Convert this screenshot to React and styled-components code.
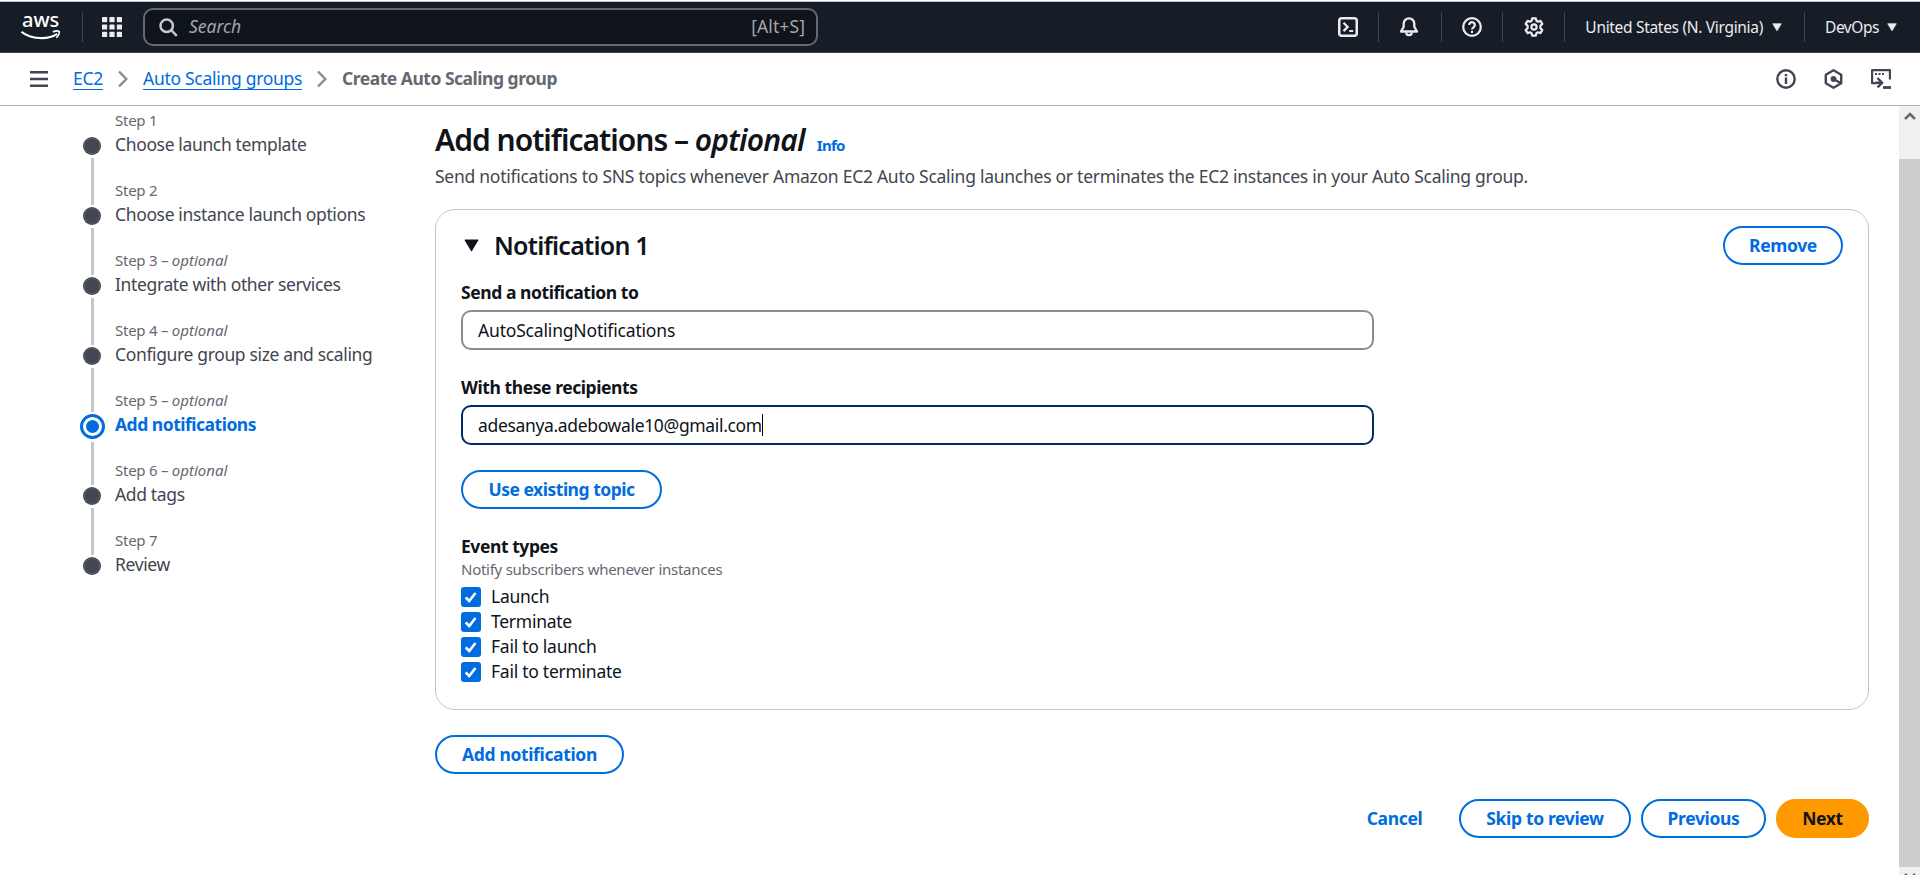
import React from "react";
import styled, { createGlobalStyle, css } from "styled-components";

const color = {
  navy: "#161d26",
  ink: "#0f141a",
  body: "#424650",
  muted: "#656871",
  link: "#006ce0",
  line: "#c6c6cd",
  navIcon: "#ebebf0",
};

const GlobalStyle = createGlobalStyle`
  * { box-sizing: border-box; }
  body {
    margin: 0;
    overflow: hidden;
    background: #fff;
    color: ${color.ink};
    font-family: "Noto Sans", "Open Sans", sans-serif;
    font-size: 17.5px;
    line-height: 25px;
    letter-spacing: -0.26px;
  }
  svg { display: block; flex: none; }
`;

const Page = styled.div`
  display: flex;
  flex-direction: column;
  width: 1920px;
  height: 875px;
`;

/* ---------- top navigation ---------- */
const TopNav = styled.header`
  display: flex;
  align-items: center;
  flex: none;
  height: 52px;
  margin-top: 1px;
  padding: 0 23px 0 21px;
  border-top: 1px solid #b9c6cf;
  border-bottom: 1px solid #424250;
  background: ${color.navy};
  color: ${color.navIcon};
`;

const NavDivider = styled.span`
  flex: none;
  width: 1px;
  height: 30px;
  margin-left: ${(p) => p.$before}px;
  margin-right: ${(p) => p.$after}px;
  background: #424650;
`;

const SearchBox = styled.div`
  display: flex;
  align-items: center;
  width: 675px;
  height: 38px;
  margin-left: 21px;
  padding: 0 11px 0 14px;
  border: 2px solid ${color.muted};
  border-radius: 10px;
  background: ${color.ink};
  color: #a4a4ad;
  letter-spacing: 0;
`;

const SearchPlaceholder = styled.span`
  flex: 1;
  margin-left: 11px;
  padding-bottom: 2px;
  font-style: italic;
`;

const Shortcut = styled.span`
  padding-bottom: 2px;
  letter-spacing: 0.1px;
`;

const NavTools = styled.div`
  display: flex;
  align-items: center;
  margin-left: auto;
`;

const NavMenu = styled.span`
  display: flex;
  align-items: center;
  gap: ${(p) => p.$gap}px;
  font-size: 15.5px;
  letter-spacing: ${(p) => p.$tracking}px;
  white-space: nowrap;
`;

/* ---------- breadcrumb bar ---------- */
const CrumbBar = styled.div`
  display: flex;
  align-items: center;
  flex: none;
  height: 53px;
  padding: 0 29px 0 30px;
  border-bottom: 1px solid #b4b4bb;
`;

const Crumbs = styled.nav`
  display: flex;
  align-items: center;
  gap: 15px;
  margin-left: 25px;
`;

const CrumbLink = styled.a`
  width: ${(p) => p.$width}px;
  height: 22px;
  border-bottom: 1px solid ${color.link};
  color: ${color.link};
  line-height: 21px;
  letter-spacing: -0.29px;
  white-space: nowrap;
`;

const CrumbCurrent = styled.span`
  padding-bottom: 1px;
  color: ${color.muted};
  font-weight: 700;
  letter-spacing: -0.49px;
`;

const PageTools = styled.div`
  display: flex;
  align-items: center;
  gap: 28px;
  margin-left: auto;
`;

/* ---------- body ---------- */
const Body = styled.div`
  display: flex;
  flex: 1;
  min-height: 0;
`;

const Steps = styled.ol`
  flex: none;
  width: 435px;
  margin: 0;
  padding: 3px 0 0 80px;
  list-style: none;
`;

const Step = styled.li`
  display: flex;
  gap: 10px;
  height: 70px;
`;

const Rail = styled.div`
  display: flex;
  flex-direction: column;
  align-items: center;
  width: 25px;
`;

const RailLine = styled.span`
  flex: ${(p) => (p.$upper ? "none" : "1")};
  width: 3px;
  height: ${(p) => (p.$upper ? `${p.$upper}px` : "auto")};
  background: ${(p) => (p.$hidden ? "transparent" : color.line)};
`;

const Dot = styled.span`
  display: flex;
  align-items: center;
  justify-content: center;
  flex: none;
  width: 18px;
  height: 18px;
  margin: 2px 1px 3px 0;
  border-radius: 50%;
  background: ${color.body};
  &::after {
    content: "";
    width: 14px;
    height: 14px;
    border: 1px solid #5a5e68;
    border-radius: 50%;
  }
  ${(p) =>
    p.$active &&
    css`
      width: 25px;
      height: 25px;
      margin-right: 0;
      border: 3px solid ${color.link};
      background: #fff;
      &::after {
        width: 13px;
        height: 13px;
        border: 0;
        background: ${color.link};
      }
    `}
`;

const StepCaption = styled.div`
  height: 22px;
  color: ${color.muted};
  font-size: 15px;
  line-height: 22px;
  em { letter-spacing: 0; }
`;

const StepTitle = styled.div`
  height: 26px;
  line-height: 26px;
  color: ${(p) => (p.$active ? color.link : color.body)};
  font-weight: ${(p) => (p.$active ? 700 : 400)};
  letter-spacing: ${(p) => (p.$active ? -0.49 : -0.36)}px;
  white-space: nowrap;
`;

const Main = styled.main`
  flex: 1;
  padding: 15px 30px 0 0;
`;

const PageTitle = styled.h1`
  display: flex;
  align-items: baseline;
  height: 38px;
  margin: 0 0 5px;
  font-size: 30px;
  font-weight: 600;
  line-height: 38px;
  letter-spacing: -1px;
  white-space: pre;
  em { letter-spacing: -0.75px; }
`;

const InfoLink = styled.a`
  margin-left: 12px;
  color: ${color.link};
  font-size: 15px;
  font-weight: 700;
  line-height: 20px;
  letter-spacing: -0.7px;
`;

const Description = styled.p`
  margin: 0 0 20px;
  color: ${color.body};
  letter-spacing: -0.265px;
`;

const Card = styled.section`
  height: 501px;
  padding: 16px 25px 0;
  border: 1px solid ${color.line};
  border-radius: 20px;
`;

const CardHeader = styled.div`
  display: flex;
  align-items: center;
  height: 39px;
  margin-bottom: 15px;
  padding-left: 3px;
`;

const CardTitle = styled.h2`
  flex: 1;
  margin: 0 0 0 15px;
  font-size: 25px;
  font-weight: 600;
  line-height: 31px;
  letter-spacing: -0.75px;
`;

const Button = styled.button`
  display: inline-flex;
  align-items: center;
  justify-content: center;
  width: ${(p) => p.$width}px;
  height: 39px;
  padding: 0;
  border: 2px solid ${(p) => (p.$primary ? "#ff9900" : p.$plain ? "transparent" : color.link)};
  border-radius: 20px;
  background: ${(p) => (p.$primary ? "#ff9900" : "transparent")};
  color: ${(p) => (p.$primary ? color.ink : color.link)};
  font: inherit;
  font-weight: 700;
  letter-spacing: ${(p) => p.$tracking ?? -0.35}px;
  white-space: nowrap;
`;

const Field = styled.div`
  width: 913px;
  margin-bottom: 25px;
`;

const Label = styled.div`
  font-weight: 700;
  letter-spacing: -0.43px;
`;

const TextInput = styled.div`
  display: flex;
  align-items: center;
  height: 40px;
  margin-top: 5px;
  padding: 0 15px;
  border: 2px solid ${(p) => (p.$focused ? "#002b66" : "#8c8c94")};
  border-radius: 10px;
  letter-spacing: ${(p) => p.$tracking}px;
`;

const Caret = styled.span`
  width: 1px;
  height: 22px;
  background: #000;
`;

const EventTypes = styled.div`
  margin-top: 25px;
`;

const Hint = styled.div`
  margin-bottom: 5px;
  color: ${color.muted};
  font-size: 15px;
  line-height: 20px;
`;

const CheckRow = styled.div`
  display: flex;
  align-items: center;
  gap: 10px;
  height: 25px;
`;

const CheckBox = styled.span`
  display: flex;
  align-items: center;
  justify-content: center;
  width: 20px;
  height: 20px;
  border-radius: 3px;
  background: ${color.link};
`;

const AddRow = styled.div`
  display: flex;
  margin-top: 25px;
`;

const Actions = styled.div`
  display: flex;
  justify-content: flex-end;
  gap: 10px;
  margin-top: 25px;
`;

const ScrollTrack = styled.div`
  display: flex;
  flex-direction: column;
  align-items: center;
  flex: none;
  width: 21px;
  background: #f0f0f0;
`;

const ScrollArrow = styled.div`
  display: flex;
  justify-content: center;
  width: 21px;
  height: ${(p) => p.$height}px;
  padding-top: 6px;
  overflow: hidden;
`;

const ScrollThumb = styled.div`
  width: 21px;
  height: 708px;
  background: #cdcdcd;
`;

/* ---------- icons ---------- */
const AwsLogo = () => (
  <svg width="40" height="50" viewBox="0 0 40 50" fill="#fff">
    <text x="1" y="24.5" fontFamily="Noto Sans" fontSize="20" fontWeight="500" letterSpacing="0">aws</text>
    <g fill="none" stroke="#fff">
      <path d="M0.500 29.700C10 37.500 27 38.100 36.200 31.800" strokeWidth="2.100" />
      <path d="M31.800 29.900c2.600-1 5.300-1.100 6.200-.5.500 1.300-.4 4.300-2.600 6.400" strokeWidth="1.700" />
    </g>
  </svg>
);

const AppsIcon = () => (
  <svg width="20" height="20" fill={color.navIcon}>
    {[0, 7.4, 14.8].map((y) =>
      [0, 7.4, 14.8].map((x) => <rect key={`${x}-${y}`} x={x} y={y} width="5.2" height="5.2" rx="0.6" />)
    )}
  </svg>
);

const SearchIcon = () => (
  <svg width="19" height="19" fill="none" stroke="#c6c6cd" strokeWidth="2.5">
    <circle cx="7.7" cy="7.7" r="6.2" />
    <path d="M12.2 12.2l5.6 5.6" />
  </svg>
);

const navStroke = { fill: "none", stroke: color.navIcon, strokeWidth: 2.5, strokeLinejoin: "round" };

const TerminalIcon = () => (
  <svg width="20" height="20" {...navStroke}>
    <rect x="1.25" y="1.25" width="17.5" height="17.5" rx="2.5" />
    <path d="M5.5 5.7l4.2 4.2-4.2 4.2M11.2 14h4" strokeWidth="2.2" strokeLinejoin="miter" />
  </svg>
);

const BellIcon = () => (
  <svg width="20" height="20" {...navStroke} strokeWidth="2.3">
    <path d="M10 1.3a5.3 5.3 0 0 0-5.3 5.3v3.2L2 14.5h16L15.3 9.8V6.6A5.3 5.3 0 0 0 10 1.3z" />
    <path d="M7.3 15.5a2.7 2.7 0 0 0 5.4 0" />
  </svg>
);

const HelpIcon = () => (
  <svg width="20" height="20" {...navStroke} strokeWidth="2.2">
    <circle cx="10" cy="10" r="8.8" />
    <path d="M7.2 8a2.8 2.8 0 1 1 4.300 2.300c-.9.6-1.5 1-1.5 2.200" />
    <path d="M10 13.800v2.200" />
  </svg>
);

const GearIcon = () => (
  <svg width="20" height="20" {...navStroke} strokeWidth="2.2">
    <path d="M8.2 1.3h3.6l.6 2.5 1.5.9 2.5-.8 1.9 3-1.9 1.900v2.400l1.900 1.900-1.900 3-2.500-.8-1.500.9-.6 2.500H8.200l-.6-2.500-1.500-.9-2.500.8-1.900-3 1.900-1.900V8.800L1.700 6.900l1.900-3 2.500.8 1.500-.9z" />
    <circle cx="10" cy="10" r="2.6" />
  </svg>
);

const TriangleDown = ({ size = 10, fill = color.navIcon }) => (
  <svg width={size} height={size * 0.86} viewBox="0 0 14 12" fill={fill} stroke={fill} strokeLinejoin="round">
    <path d="M1 1h12L7 11z" />
  </svg>
);

const MenuIcon = () => (
  <svg width="18" height="18" stroke={color.body} strokeWidth="2.4">
    <path d="M0 2.2h18M0 9h18M0 15.8h18" />
  </svg>
);

const ChevronRight = () => (
  <svg width="10" height="18" fill="none" stroke="#8c8c94" strokeWidth="2.5">
    <path d="M1 1.5l7.3 7.5L1 16.5" />
  </svg>
);

const InfoIcon = () => (
  <svg width="20" height="20" fill="none" stroke={color.body} strokeWidth="2.4">
    <circle cx="10" cy="10" r="8.7" />
    <path d="M10 5v2.2M10 8.5v6.5" />
  </svg>
);

const HexIcon = () => (
  <svg width="19" height="20" fill="none" stroke={color.body} strokeWidth="2.4" strokeLinejoin="round">
    <path d="M9.5 1.3l7.7 4.4v8.6l-7.7 4.4-7.7-4.4V5.7z" />
    <circle cx="9.5" cy="10" r="2.9" fill={color.body} stroke="none" />
    <path d="M9.5 10l7 4" />
  </svg>
);

const ShellIcon = () => (
  <svg width="20" height="20" fill="none" stroke={color.body} strokeWidth="2.2">
    <path d="M5.500 14.200H1.100V1.100h17.800v9.400" strokeLinejoin="round" />
    <path d="M4 5h2M7.500 5h2M11 5h2" />
    <path d="M4.500 13.800h6M6.500 9l4.600 4.800-4.600 4.600" strokeWidth="2.400" />
    <path d="M12 18.500h8" strokeWidth="2.800" />
  </svg>
);

const CheckIcon = () => (
  <svg width="14" height="14" fill="none" stroke="#fff" strokeWidth="2.6">
    <path d="M1.700 7.300l3.500 3.700 6.300-8" />
  </svg>
);

const ScrollChevron = ({ down }) => (
  <svg width="12" height="8" fill="none" stroke={color.muted} strokeWidth="2.5">
    <path d={down ? "M1 1l5 5 5-5" : "M1 7l5-5 5 5"} />
  </svg>
);

/* ---------- data ---------- */
const steps = [
  { title: "Choose launch template" },
  { title: "Choose instance launch options" },
  { title: "Integrate with other services", optional: true },
  { title: "Configure group size and scaling", optional: true },
  { title: "Add notifications", optional: true, active: true },
  { title: "Add tags", optional: true },
  { title: "Review" },
];

const events = ["Launch", "Terminate", "Fail to launch", "Fail to terminate"];

export default function App() {
  return (
    <Page>
      <GlobalStyle />
      <TopNav>
        <AwsLogo />
        <NavDivider $before={21} $after={19} />
        <AppsIcon />
        <SearchBox>
          <SearchIcon />
          <SearchPlaceholder>Search</SearchPlaceholder>
          <Shortcut>[Alt+S]</Shortcut>
        </SearchBox>
        <NavTools>
          <TerminalIcon />
          <NavDivider $before={20} $after={20} />
          <BellIcon />
          <NavDivider $before={22} $after={20} />
          <HelpIcon />
          <NavDivider $before={20} $after={21} />
          <GearIcon />
          <NavDivider $before={20} $after={20} />
          <NavMenu $gap={9} $tracking={-0.31}>
            United States (N. Virginia) <TriangleDown />
          </NavMenu>
          <NavDivider $before={22} $after={20} />
          <NavMenu $gap={8} $tracking={-0.45}>
            DevOps <TriangleDown />
          </NavMenu>
        </NavTools>
      </TopNav>

      <CrumbBar>
        <MenuIcon />
        <Crumbs>
          <CrumbLink $width={30}>EC2</CrumbLink>
          <ChevronRight />
          <CrumbLink $width={159}>Auto Scaling groups</CrumbLink>
          <ChevronRight />
          <CrumbCurrent>Create Auto Scaling group</CrumbCurrent>
        </Crumbs>
        <PageTools>
          <InfoIcon />
          <HexIcon />
          <ShellIcon />
        </PageTools>
      </CrumbBar>

      <Body>
        <Steps>
          {steps.map((s, i) => (
            <Step key={s.title}>
              <Rail>
                <RailLine $upper={s.active ? 23 : 26} $hidden={i === 0} />
                <Dot $active={s.active} />
                <RailLine $hidden={i === steps.length - 1} />
              </Rail>
              <div>
                <StepCaption>
                  Step {i + 1}
                  {s.optional && <> – <em>optional</em></>}
                </StepCaption>
                <StepTitle $active={s.active}>{s.title}</StepTitle>
              </div>
            </Step>
          ))}
        </Steps>

        <Main>
          <PageTitle>
            <span>Add notifications – </span>
            <em>optional</em>
            <InfoLink>Info</InfoLink>
          </PageTitle>
          <Description>
            Send notifications to SNS topics whenever Amazon EC2 Auto Scaling launches or terminates the EC2 instances in
            your Auto Scaling group.
          </Description>

          <Card>
            <CardHeader>
              <TriangleDown size={15} fill={color.ink} />
              <CardTitle>Notification 1</CardTitle>
              <Button $width={120}>Remove</Button>
            </CardHeader>
            <Field>
              <Label>Send a notification to</Label>
              <TextInput $tracking={-0.18}>AutoScalingNotifications</TextInput>
            </Field>
            <Field>
              <Label>With these recipients</Label>
              <TextInput $focused $tracking={-0.34}>
                adesanya.adebowale10@gmail.com
                <Caret />
              </TextInput>
            </Field>
            <Button $width={201} $tracking={-0.49}>Use existing topic</Button>
            <EventTypes>
              <Label>Event types</Label>
              <Hint>Notify subscribers whenever instances</Hint>
              {events.map((name) => (
                <CheckRow key={name}>
                  <CheckBox>
                    <CheckIcon />
                  </CheckBox>
                  {name}
                </CheckRow>
              ))}
            </EventTypes>
          </Card>

          <AddRow>
            <Button $width={189}>Add notification</Button>
          </AddRow>
          <Actions>
            <Button $plain $width={109}>Cancel</Button>
            <Button $width={172}>Skip to review</Button>
            <Button $width={125}>Previous</Button>
            <Button $primary $width={93}>Next</Button>
          </Actions>
        </Main>

        <ScrollTrack>
          <ScrollArrow $height={53}>
            <ScrollChevron />
          </ScrollArrow>
          <ScrollThumb />
          <ScrollArrow $height={8}>
            <ScrollChevron down />
          </ScrollArrow>
        </ScrollTrack>
      </Body>
    </Page>
  );
}
